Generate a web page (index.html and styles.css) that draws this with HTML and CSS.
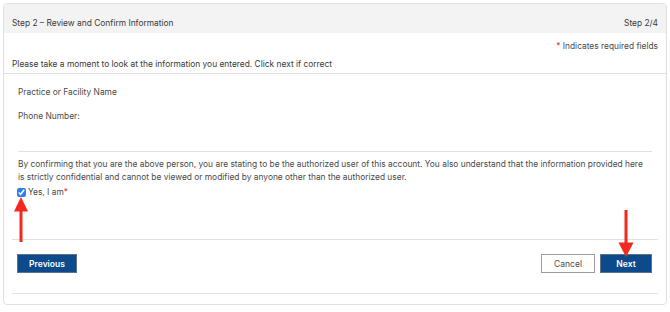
FILE: index.html
```html
<!DOCTYPE html>
<html lang="en">
<head>
  <meta charset="UTF-8">
  <meta name="viewport" content="width=device-width, initial-scale=1.0">
  <title>Step 2 - Review and Confirm Information</title>
  <link rel="stylesheet" href="styles.css">
</head>
<body>
  <div class="card">
    <!-- Step header -->
    <div class="card-header">
      <span>Step 2 – Review and Confirm Information</span>
      <span>Step 2/4</span>
    </div>

    <div class="card-intro">
      <div class="required"><span class="star">*</span> Indicates required fields</div>
      <div class="intro-text">Please take a moment to look at the information you entered. Click next if correct</div>
    </div>

    <!-- Review fields -->
    <div class="card-body">
      <div class="field field-first">Practice or Facility Name</div>
      <div class="field">Phone Number:</div>
      <div class="field-divider"></div>
      <p class="consent">By confirming that you are the above person, you are stating to be the authorized user of this account. You also understand that the information provided here is strictly confidential and cannot be viewed or modified by anyone other than the authorized user.</p>
      <label class="confirm">
        <input type="checkbox" checked>
        <span>Yes, I am<span class="star">*</span></span>
      </label>
    </div>

    <!-- Actions -->
    <div class="card-footer">
      <button class="btn btn-primary btn-prev">Previous</button>
      <div class="actions-right">
        <button class="btn btn-outline">Cancel</button>
        <button class="btn btn-primary btn-next">Next</button>
      </div>
    </div>
  </div>

  <!-- Annotation arrows -->
  <svg class="annotations" viewBox="0 0 670 312" xmlns="http://www.w3.org/2000/svg">
    <rect x="19.5" y="209" width="3" height="33" fill="#f4281d"/>
    <polygon points="14,211.5 28,211.5 21,197" fill="#f4281d"/>
    <rect x="624.5" y="210" width="3" height="34" fill="#f4281d"/>
    <polygon points="618.5,242.5 633.5,242.5 626,257" fill="#f4281d"/>
  </svg>
</body>
</html>
```

FILE: styles.css
```css
:root {
  --text: #3a3a3a;
  --muted: #4a4a4a;
  --border: #e1e1e1;
  --header-bg: #f3f3f3;
  --primary: #0c4a8b;
  --required: #e5332a;
}
* {
  margin: 0;
  padding: 0;
  box-sizing: border-box;
}
body {
  font-family: "Inter", "Roboto", sans-serif;
  font-size: 8.4px;
  line-height: 13px;
  color: var(--text);
  background: #ffffff;
  position: relative;
  width: 670px;
  height: 312px;
  overflow: hidden;
}
/* Main card */
.card {
  margin: 3px 0 0 3px;
  width: 664px;
  height: 302px;
  border: 1px solid var(--border);
  border-radius: 4px;
  overflow: hidden;
}
.card-header {
  height: 29px;
  padding: 12.5px 8px 0;
  background: var(--header-bg);
  display: flex;
  justify-content: space-between;
}
.card-intro {
  padding: 6.5px 8px 2.5px;
  border-bottom: 1px solid var(--border);
}
.required {
  text-align: right;
  color: var(--muted);
}
.star {
  color: var(--required);
}
.intro-text {
  margin-top: 5px;
}
/* Body */
.card-body {
  padding: 0 14px;
  color: var(--muted);
}
.field {
  margin-top: 11px;
}
.field-first {
  margin-top: 11.5px;
}
.field-divider {
  margin-top: 28.5px;
  border-top: 1px solid var(--border);
}
.consent {
  margin: 5.5px 5px 0 0;
}
.confirm {
  margin-top: 2px;
  display: flex;
  align-items: center;
  gap: 2px;
}
.confirm input {
  width: 9px;
  height: 9px;
  margin: 0 0 0 -1px;
  accent-color: #2f7ef4;
}
/* Footer */
.card-footer {
  margin: 40.5px 8px 0;
  padding: 14px 6px 20px 5px;
  border-top: 1px solid var(--border);
  border-bottom: 1px solid var(--border);
  display: flex;
  justify-content: space-between;
}
.actions-right {
  display: flex;
  gap: 5px;
}
.btn {
  height: 19px;
  font-family: inherit;
  font-size: 8.5px;
  cursor: pointer;
}
.btn-primary {
  background: var(--primary);
  color: #ffffff;
  font-weight: 600;
  border: 1px solid #5d7188;
}
.btn-prev {
  width: 60px;
}
.btn-next {
  width: 52px;
}
.btn-outline {
  width: 54px;
  background: #ffffff;
  color: var(--muted);
  border: 1px solid #9c9c9c;
}
/* Red annotation arrows drawn over the form */
.annotations {
  position: absolute;
  top: 0;
  left: 0;
  width: 670px;
  height: 312px;
  pointer-events: none;
}
```
